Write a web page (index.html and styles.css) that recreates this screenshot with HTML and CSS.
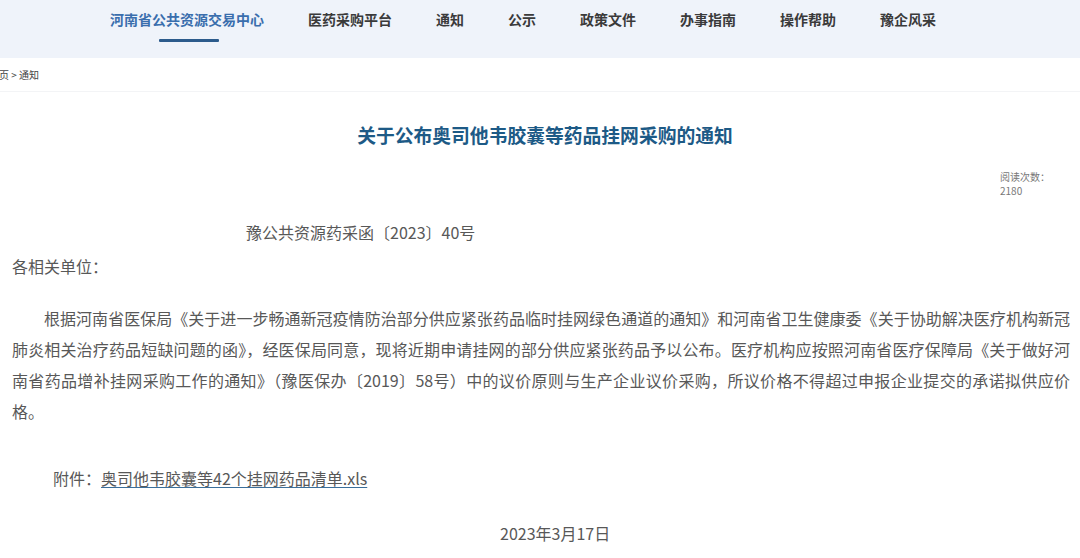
FILE: index.html
```html
<!DOCTYPE html>
<html lang="zh-CN">
<head>
<meta charset="utf-8">
<title>关于公布奥司他韦胶囊等药品挂网采购的通知</title>
<link rel="stylesheet" href="styles.css">
</head>
<body>
<header class="nav">
  <a class="nav-item active"><span>河南省公共资源交易中心</span><i class="bar"></i></a>
  <a class="nav-item"><span>医药采购平台</span></a>
  <a class="nav-item"><span>通知</span></a>
  <a class="nav-item"><span>公示</span></a>
  <a class="nav-item"><span>政策文件</span></a>
  <a class="nav-item"><span>办事指南</span></a>
  <a class="nav-item"><span>操作帮助</span></a>
  <a class="nav-item"><span>豫企风采</span></a>
</header>
<div class="crumb"><span class="crumb-inner">首页 &gt; 通知</span></div>
<main class="article">
  <h1 class="title">关于公布奥司他韦胶囊等药品挂网采购的通知</h1>
  <div class="meta"><div class="meta-box">阅读次数：<br>2180</div></div>
  <p class="docno">豫公共资源药采函〔2023〕40号</p>
  <p class="salute">各相关单位：</p>
  <p class="body">根据河南省医保局《关于进一步畅通新冠疫情防治部分供应紧张药品临时挂网绿色通道的通知》和河南省卫生健康委《关于协助解决医疗机构新冠肺炎相关治疗药品短缺问题的函》，经医保局同意，现将近期申请挂网的部分供应紧张药品予以公布。医疗机构应按照河南省医疗保障局《关于做好河南省药品增补挂网采购工作的通知》（豫医保办〔2019〕58号）中的议价原则与生产企业议价采购，所议价格不得超过申报企业提交的承诺拟供应价格。</p>
  <p class="attach">附件：<a class="file">奥司他韦胶囊等42个挂网药品清单.xls</a></p>
  <p class="date">2023年3月17日</p>
</main>
</body>
</html>
```
FILE: styles.css
```css
html, body {
  margin: 0;
  padding: 0;
  background: #ffffff;
  font-family: "Noto Sans CJK SC", "Noto Sans", sans-serif;
  color: #585858;
}
.nav {
  height: 58px;
  background: #eff3fa;
  display: flex;
  align-items: flex-start;
  gap: 44px;
  padding-left: 110px;
  box-sizing: border-box;
}
.nav-item {
  display: flex;
  flex-direction: column;
  align-items: center;
  padding-top: 10px;
  font-size: 14px;
  font-weight: 700;
  line-height: 18px;
  color: #3a3a3a;
  text-decoration: none;
}
.nav-item.active {
  color: #3a6ead;
}
.bar {
  display: block;
  width: 60px;
  height: 3px;
  margin-top: 11px;
  margin-left: 4px;
  background: #2c5b8c;
  border-radius: 1px;
}
.crumb {
  height: 33px;
  border-bottom: 1px solid #f3f4f6;
  font-size: 10px;
  line-height: 33px;
  color: #444;
  overflow: hidden;
}
.crumb-inner {
  display: block;
  margin-left: -11px;
}
.article {
  display: flex;
  flex-direction: column;
}
.title {
  margin: 29px 0 0;
  padding-left: 10px;
  text-align: center;
  font-size: 18.8px;
  line-height: 28px;
  font-weight: 700;
  color: #1d5a86;
}
.meta {
  margin-top: 21px;
  display: flex;
  justify-content: flex-end;
  padding-right: 28px;
}
.meta-box {
  width: 52px;
  font-size: 10px;
  line-height: 14px;
  color: #777;
}
.docno {
  margin: 22px 0 0;
  padding-left: 246px;
  font-size: 16px;
  line-height: 24px;
}
.salute {
  margin: 10px 0 0;
  padding-left: 12px;
  font-size: 16px;
  line-height: 24px;
}
.body {
  margin: 25px 0 0;
  padding: 0 10px 0 12px;
  font-size: 16px;
  line-height: 31px;
  text-indent: 2em;
  text-align: justify;
}
.attach {
  margin: 39px 0 0;
  padding-left: 53px;
  font-size: 16px;
  line-height: 24px;
}
.file {
  color: #585858;
  text-decoration: underline;
  text-decoration-color: #3a6e9a;
  text-underline-offset: 2px;
}
.date {
  margin: 31px 0 0;
  padding-left: 500px;
  font-size: 16px;
  line-height: 24px;
}
```
